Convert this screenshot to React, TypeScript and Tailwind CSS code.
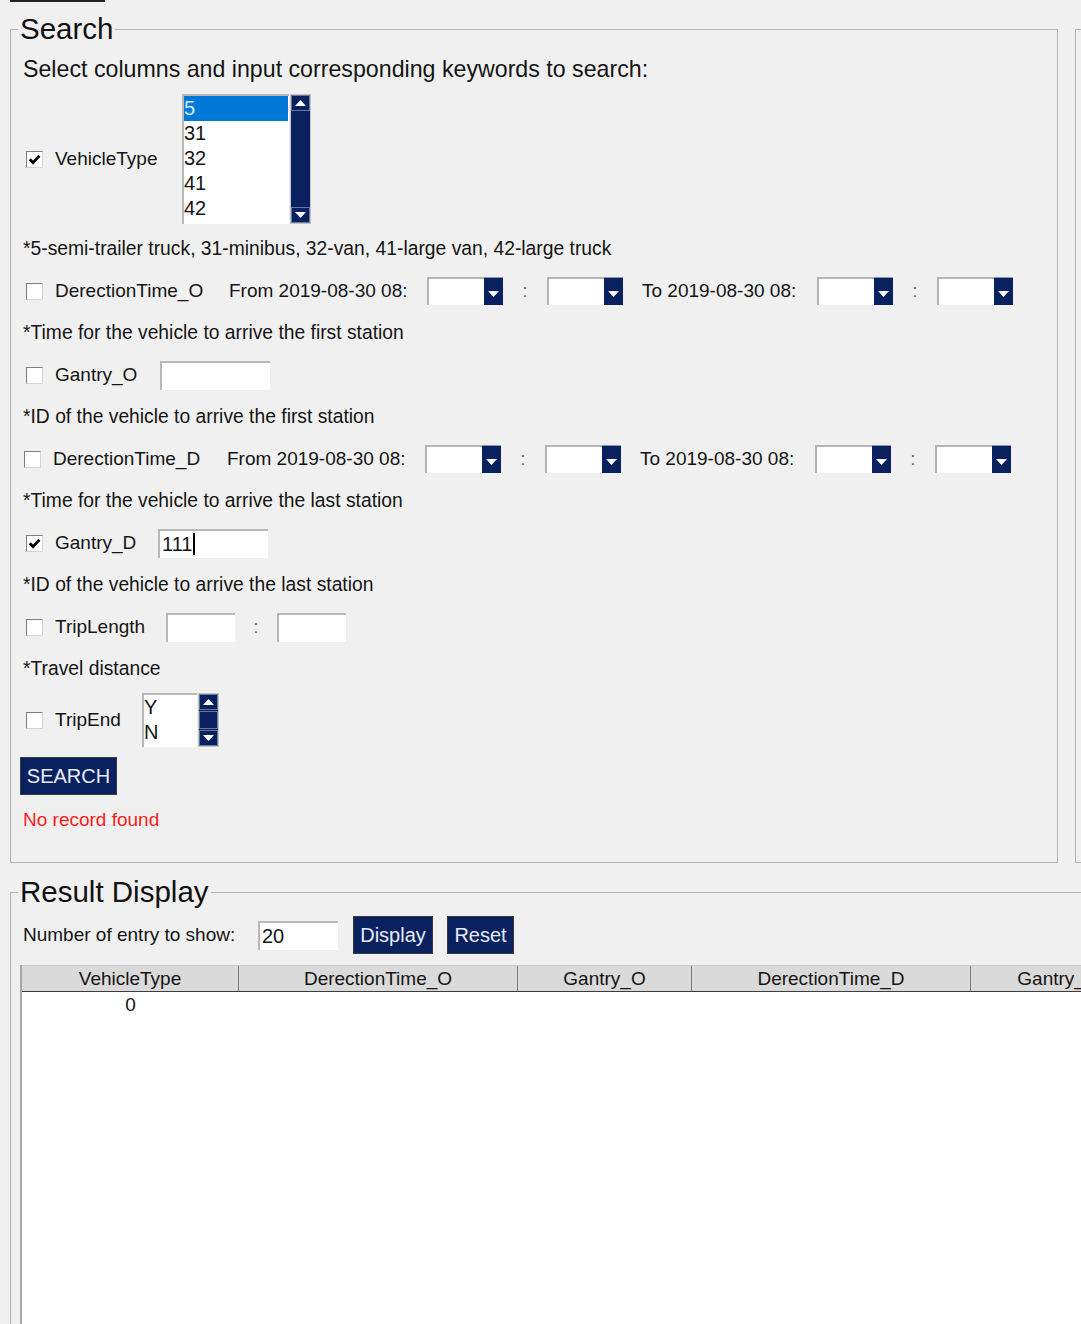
import React from "react";

function Check({ checked }: { checked?: boolean }) {
  return (
    <div className="ml-[6px] w-[17px] h-[17px] shrink-0 bg-white border border-t-[#7e7e7e] border-l-[#7e7e7e] border-b-[#d4d4d4] border-r-[#d4d4d4] flex items-center justify-center">
      {checked ? (
        <svg width="13" height="13" viewBox="0 0 13 13">
          <path d="M1.8 6.2 L5 9.6 L11.4 2.8" fill="none" stroke="#000" strokeWidth="2.8" />
        </svg>
      ) : null}
    </div>
  );
}

function DownTri() {
  return (
    <svg width="11" height="6" viewBox="0 0 11 6">
      <polygon points="0,0 11,0 5.5,6" fill="#fff" />
    </svg>
  );
}

function UpTri() {
  return (
    <svg width="11" height="6" viewBox="0 0 11 6">
      <polygon points="0,6 11,6 5.5,0" fill="#fff" />
    </svg>
  );
}

function Combo() {
  return (
    <div className="flex h-[28px] w-[76px] shrink-0">
      <div className="flex-1 bg-white border-t-2 border-l-2 border-t-[#b4b4b4] border-l-[#b4b4b4]" />
      <div className="w-[19px] bg-[#0a2160] border-t border-t-[#8a93ad] flex items-center justify-center pt-[5px]">
        <DownTri />
      </div>
    </div>
  );
}

function TextBox({ w, value, caret }: { w: string; value?: string; caret?: boolean }) {
  return (
    <div
      className={
        w +
        " h-[29px] shrink-0 bg-white border-t-2 border-l-2 border-t-[#b8b8b8] border-l-[#b8b8b8] flex items-center pl-[2px] text-[20px] leading-[24px]"
      }
    >
      {value}
      {caret ? <span className="inline-block w-[2px] h-[22px] bg-black ml-[1px]" /> : null}
    </div>
  );
}

function VScroll({ h, thumb }: { h: string; thumb?: boolean }) {
  return (
    <div className={h + " w-[21px] shrink-0 flex flex-col bg-[#0a2160] border border-[#c4c4c4]"}>
      <div className="h-[16px] flex items-center justify-center border border-[#6a77a0]">
        <UpTri />
      </div>
      {thumb ? (
        <div className="flex-1 border border-[#6a77a0] my-[1px]" />
      ) : (
        <div className="flex-1" />
      )}
      <div className="h-[16px] flex items-center justify-center border border-[#6a77a0]">
        <DownTri />
      </div>
    </div>
  );
}

function Label({ w, children }: { w: string; children: React.ReactNode }) {
  return <div className={"ml-[12px] shrink-0 whitespace-nowrap text-[19px] leading-[24px] " + w}>{children}</div>;
}

function Note({ children }: { children: React.ReactNode }) {
  return <div className="mt-[16px] pl-[3px] h-[24px] text-[19.3px] leading-[24px] whitespace-nowrap">{children}</div>;
}

function Colon({ w }: { w: string }) {
  return <div className={"shrink-0 text-center text-[19px] text-[#666] " + w}>:</div>;
}

function TimeRow({ label, lw }: { label: string; lw: string }) {
  return (
    <div className="mt-[16px] h-[28px] flex items-center">
      <Check />
      <Label w={lw}>{label}</Label>
      <div className="w-[198px] shrink-0 text-[19px] whitespace-nowrap">From 2019-08-30 08:</div>
      <Combo />
      <Colon w="w-[44px]" />
      <Combo />
      <div className="ml-[19px] w-[175px] shrink-0 text-[19px] whitespace-nowrap">To 2019-08-30 08:</div>
      <Combo />
      <Colon w="w-[44px]" />
      <Combo />
    </div>
  );
}

function NavyBtn({ w, children }: { w: string; children: React.ReactNode }) {
  return (
    <div
      className={
        w +
        " h-[38px] shrink-0 bg-[#0a2160] border border-[#3a3a3a] text-[#e6ecf7] text-[20px] flex items-center justify-center"
      }
    >
      {children}
    </div>
  );
}

export default function App() {
  const vtItems = ["5", "31", "32", "41", "42"];
  return (
    <div className="w-[1081px] h-[1324px] overflow-hidden bg-[#f0f0f0] font-['Liberation_Sans',Arial,sans-serif] text-[#141414]">
      <div className="ml-[10px] w-[95px] h-[2px] bg-[#222]" />
      <div className="flex mt-[10px]">
        <fieldset className="ml-[10px] w-[1048px] h-[851px] shrink-0 border border-[#b4b4b4] p-0 m-0 min-w-0">
          <legend className="ml-[7px] px-[2px] text-[29.5px] leading-[34px] text-[#111]">Search</legend>
          <div className="pl-[9px] flex flex-col">
            <div className="mt-[10px] pl-[3px] h-[26px] text-[23.2px] leading-[26px] whitespace-nowrap">
              Select columns and input corresponding keywords to search:
            </div>

            <div className="mt-[12px] h-[130px] flex items-center">
              <Check checked />
              <Label w="w-[127px]">VehicleType</Label>
              <div className="flex h-[130px]">
                <div className="w-[107px] bg-white border-t-2 border-l-2 border-t-[#b8b8b8] border-l-[#b8b8b8] flex flex-col">
                  {vtItems.map((it, i) => (
                    <div
                      key={it}
                      className={
                        "h-[25px] leading-[25px] text-[20px] " +
                        (i === 0 ? "bg-[#0078d7] text-[#d8ebff] mr-[1px]" : "text-[#141414]")
                      }
                    >
                      {it}
                    </div>
                  ))}
                </div>
                <div className="w-[1px]" />
                <VScroll h="h-[130px]" />
              </div>
            </div>

            <div className="mt-[13px] pl-[3px] h-[24px] text-[19.3px] leading-[24px] whitespace-nowrap">
              *5-semi-trailer truck, 31-minibus, 32-van, 41-large van, 42-large truck
            </div>

            <TimeRow label="DerectionTime_O" lw="w-[174px]" />
            <Note>*Time for the vehicle to arrive the first station</Note>

            <div className="mt-[16px] h-[28px] flex items-center">
              <Check />
              <Label w="w-[105px]">Gantry_O</Label>
              <TextBox w="w-[110px]" />
            </div>
            <Note>*ID of the vehicle to arrive the first station</Note>

            <div className="-ml-[2px]">
              <TimeRow label="DerectionTime_D" lw="w-[174px]" />
            </div>
            <Note>*Time for the vehicle to arrive the last station</Note>

            <div className="mt-[16px] h-[28px] flex items-center">
              <Check checked />
              <Label w="w-[103px]">Gantry_D</Label>
              <TextBox w="w-[110px]" value="111" caret />
            </div>
            <Note>*ID of the vehicle to arrive the last station</Note>

            <div className="mt-[16px] h-[28px] flex items-center">
              <Check />
              <Label w="w-[111px]">TripLength</Label>
              <TextBox w="w-[69px]" />
              <Colon w="w-[42px]" />
              <TextBox w="w-[69px]" />
            </div>
            <Note>*Travel distance</Note>

            <div className="mt-[12px] h-[54px] flex items-center">
              <Check />
              <Label w="w-[87px]">TripEnd</Label>
              <div className="flex h-[54px]">
                <div className="w-[55px] bg-white border-t-2 border-l-2 border-t-[#b8b8b8] border-l-[#b8b8b8] flex flex-col">
                  <div className="h-[25px] leading-[25px] text-[20px]">Y</div>
                  <div className="h-[25px] leading-[25px] text-[20px]">N</div>
                </div>
                <div className="w-[1px]" />
                <VScroll h="h-[54px]" thumb />
              </div>
            </div>

            <div className="mt-[10px] flex">
              <NavyBtn w="w-[97px]">SEARCH</NavyBtn>
            </div>

            <div className="mt-[13px] pl-[3px] h-[24px] text-[19px] leading-[24px] text-[#ff1a1a]">No record found</div>
          </div>
        </fieldset>
        <div className="ml-[17px] mt-[17px] h-[834px] flex-1 border-l border-t border-b border-[#b4b4b4]" />
      </div>

      <fieldset className="mt-[12px] ml-[10px] w-[1100px] h-[520px] shrink-0 border border-[#b4b4b4] p-0 min-w-0">
        <legend className="ml-[7px] px-[2px] text-[29.5px] leading-[34px] text-[#111]">Result Display</legend>
        <div className="pl-[9px] flex flex-col">
          <div className="mt-[7px] h-[38px] flex items-center">
            <div className="pl-[3px] w-[238px] shrink-0 text-[19px] whitespace-nowrap">Number of entry to show:</div>
            <TextBox w="w-[80px]" value="20" />
            <div className="ml-[15px]">
              <NavyBtn w="w-[80px]">Display</NavyBtn>
            </div>
            <div className="ml-[14px]">
              <NavyBtn w="w-[67px]">Reset</NavyBtn>
            </div>
          </div>

          <div className="mt-[11px] flex flex-col border-l-2 border-[#a8a8a8]">
            <div className="flex h-[27px] bg-[#dadada] border-t border-[#c8c8c8] border-b border-b-[#3c3c3c] text-[19px] leading-[25px]">
              <div className="w-[217px] shrink-0 text-center border-r border-[#7a7a7a]">VehicleType</div>
              <div className="w-[279px] shrink-0 text-center border-r border-[#7a7a7a]">DerectionTime_O</div>
              <div className="w-[174px] shrink-0 text-center border-r border-[#7a7a7a]">Gantry_O</div>
              <div className="w-[279px] shrink-0 text-center border-r border-[#7a7a7a]">DerectionTime_D</div>
              <div className="w-[174px] shrink-0 text-center">Gantry_D</div>
            </div>
            <div className="h-[400px] bg-white">
              <div className="flex h-[26px] text-[19px] leading-[26px]">
                <div className="w-[217px] text-center">0</div>
              </div>
            </div>
          </div>
        </div>
      </fieldset>
    </div>
  );
}
